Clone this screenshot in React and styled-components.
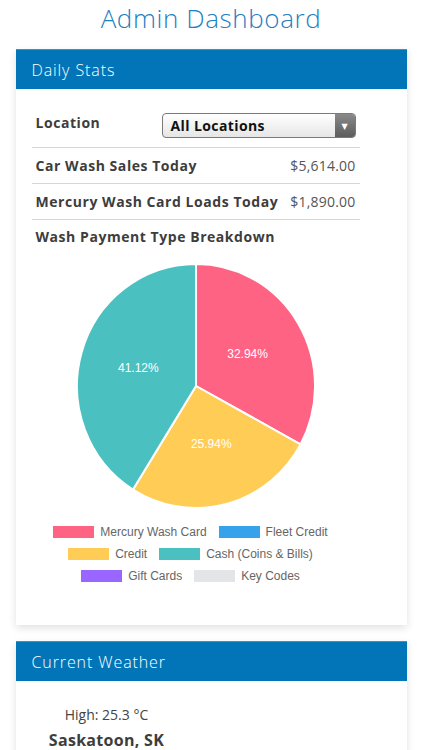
import React from "react";
import styled, { createGlobalStyle } from "styled-components";

const GlobalStyle = createGlobalStyle`
  body {
    margin: 0;
    background: #ffffff;
    font-family: "Open Sans", "DejaVu Sans", sans-serif;
    color: #3a3a3a;
  }
`;

const Page = styled.div`
  display: flex;
  flex-direction: column;
  align-items: center;
  width: 422px;
  padding-bottom: 20px;
`;

const Title = styled.h1`
  margin: 1px 0 0;
  height: 41px;
  font-size: 26px;
  line-height: 34px;
  font-weight: 300;
  color: #1f80c2;
  letter-spacing: 0.6px;
`;

const Card = styled.div`
  width: 391px;
  margin-top: ${(p) => p.$top || 0}px;
  background: #ffffff;
  box-shadow: 0 3px 8px rgba(0, 0, 0, 0.12);
`;

const CardHeader = styled.div`
  height: 39px;
  display: flex;
  align-items: center;
  padding-left: 16px;
  background: #0275b8;
  border-top: 1px solid #3a93cc;
  color: #ffffff;
  font-size: 16px;
  font-weight: 300;
  letter-spacing: 0.9px;
`;

const CardBody = styled.div`
  padding: ${(p) => p.$pad || "14px 47px 42px 16px"};
`;

const Row = styled.div`
  display: flex;
  align-items: center;
  justify-content: space-between;
  height: ${(p) => p.$h || 35}px;
  padding: 0 4px;
  border-bottom: ${(p) => (p.$line ? "1px solid #d6d6d6" : "none")};
`;

const Label = styled.span`
  margin-bottom: ${(p) => p.$lift || 0}px;
  font-size: 14px;
  font-weight: 700;
  color: #3d3d3d;
  letter-spacing: 0.55px;
`;

const Value = styled.span`
  font-size: 14px;
  color: #555555;
  letter-spacing: 0.2px;
`;

const Select = styled.div`
  display: flex;
  width: 194px;
  height: 25px;
  border: 1px solid #7a7a7a;
  border-radius: 4px;
  overflow: hidden;
  background: linear-gradient(#ffffff, #e6e6e6);
  box-sizing: border-box;
`;

const SelectText = styled.span`
  flex: 1;
  padding-left: 8px;
  font-size: 14px;
  font-weight: 700;
  line-height: 23px;
  color: #111111;
  letter-spacing: 0.4px;
`;

const SelectArrow = styled.span`
  width: 20px;
  display: flex;
  align-items: center;
  justify-content: center;
  background: linear-gradient(#8a8a8a, #5c5c5c);
  color: #ffffff;
  font-size: 8px;
`;

const ChartTitle = styled.div`
  padding: 7px 4px 0;
  font-size: 14px;
  font-weight: 700;
  color: #3d3d3d;
  letter-spacing: 0.55px;
`;

const ChartWrap = styled.div`
  display: flex;
  justify-content: center;
  padding-top: 17px;
`;

const Legend = styled.div`
  display: flex;
  flex-direction: column;
  align-items: center;
  gap: 8px;
  margin-top: 16px;
  margin-left: -10px;
`;

const LegendRow = styled.div`
  display: flex;
  gap: 12px;
`;

const LegendItem = styled.div`
  display: flex;
  align-items: center;
  gap: 6px;
  font-family: "Liberation Sans", Arial, sans-serif;
  font-size: 12px;
  color: #666666;
`;

const Swatch = styled.span`
  width: 41px;
  height: 12px;
  background: ${(p) => p.$c};
`;

const Weather = styled.div`
  display: flex;
  flex-direction: column;
  align-items: center;
  width: 150px;
  padding-top: 24px;
`;

const High = styled.div`
  font-size: 14px;
  color: #444444;
`;

const City = styled.div`
  margin-top: 5px;
  font-size: 16px;
  font-weight: 700;
  color: #3d3d3d;
  letter-spacing: 0.3px;
`;

const slices = [
  { v: 32.94, c: "#ff6384" },
  { v: 25.94, c: "#ffcd56" },
  { v: 41.12, c: "#4bc0c0" },
];

function Pie() {
  const w = 240;
  const h = 246;
  const cx = w / 2;
  const cy = h / 2;
  const rx = 119;
  const ry = 122;
  let start = 0;
  const parts = slices.map((s) => {
    const a0 = (start / 100) * Math.PI * 2;
    const a1 = ((start + s.v) / 100) * Math.PI * 2;
    const mid = (a0 + a1) / 2;
    start += s.v;
    const x0 = cx + rx * Math.sin(a0);
    const y0 = cy - ry * Math.cos(a0);
    const x1 = cx + rx * Math.sin(a1);
    const y1 = cy - ry * Math.cos(a1);
    const large = a1 - a0 > Math.PI ? 1 : 0;
    return {
      ...s,
      d: `M${cx},${cy} L${x0},${y0} A${rx},${ry} 0 ${large} 1 ${x1},${y1} Z`,
      lx: cx + 60 * Math.sin(mid),
      ly: cy - 61 * Math.cos(mid),
    };
  });
  return (
    <svg width={w} height={h} viewBox={`0 0 ${w} ${h}`}>
      {parts.map((p) => (
        <path key={p.c} d={p.d} fill={p.c} stroke="#ffffff" strokeWidth="2" />
      ))}
      {parts.map((p) => (
        <text
          key={p.v}
          x={p.lx}
          y={p.ly}
          fill="#ffffff"
          fontSize="12"
          fontFamily="Liberation Sans, Arial, sans-serif"
          textAnchor="middle"
          dominantBaseline="middle"
        >
          {p.v.toFixed(2)}%
        </text>
      ))}
    </svg>
  );
}

export default function App() {
  return (
    <Page>
      <GlobalStyle />
      <Title>Admin Dashboard</Title>
      <Card $top={7}>
        <CardHeader>Daily Stats</CardHeader>
        <CardBody>
          <Row $h={44} $line>
            <Label $lift={6}>Location</Label>
            <Select>
              <SelectText>All Locations</SelectText>
              <SelectArrow>▼</SelectArrow>
            </Select>
          </Row>
          <Row $line>
            <Label>Car Wash Sales Today</Label>
            <Value>$5,614.00</Value>
          </Row>
          <Row $line>
            <Label>Mercury Wash Card Loads Today</Label>
            <Value>$1,890.00</Value>
          </Row>
          <ChartTitle>Wash Payment Type Breakdown</ChartTitle>
          <ChartWrap>
            <Pie />
          </ChartWrap>
          <Legend>
            <LegendRow>
              <LegendItem><Swatch $c="#ff6384" />Mercury Wash Card</LegendItem>
              <LegendItem><Swatch $c="#36a2eb" />Fleet Credit</LegendItem>
            </LegendRow>
            <LegendRow>
              <LegendItem><Swatch $c="#ffcd56" />Credit</LegendItem>
              <LegendItem><Swatch $c="#4bc0c0" />Cash (Coins &amp; Bills)</LegendItem>
            </LegendRow>
            <LegendRow>
              <LegendItem><Swatch $c="#9966ff" />Gift Cards</LegendItem>
              <LegendItem><Swatch $c="#e4e5e7" />Key Codes</LegendItem>
            </LegendRow>
          </Legend>
        </CardBody>
      </Card>
      <Card $top={16}>
        <CardHeader>Current Weather</CardHeader>
        <CardBody $pad="0 16px 20px 16px">
          <Weather>
            <High>High: 25.3 °C</High>
            <City>Saskatoon, SK</City>
          </Weather>
        </CardBody>
      </Card>
    </Page>
  );
}
